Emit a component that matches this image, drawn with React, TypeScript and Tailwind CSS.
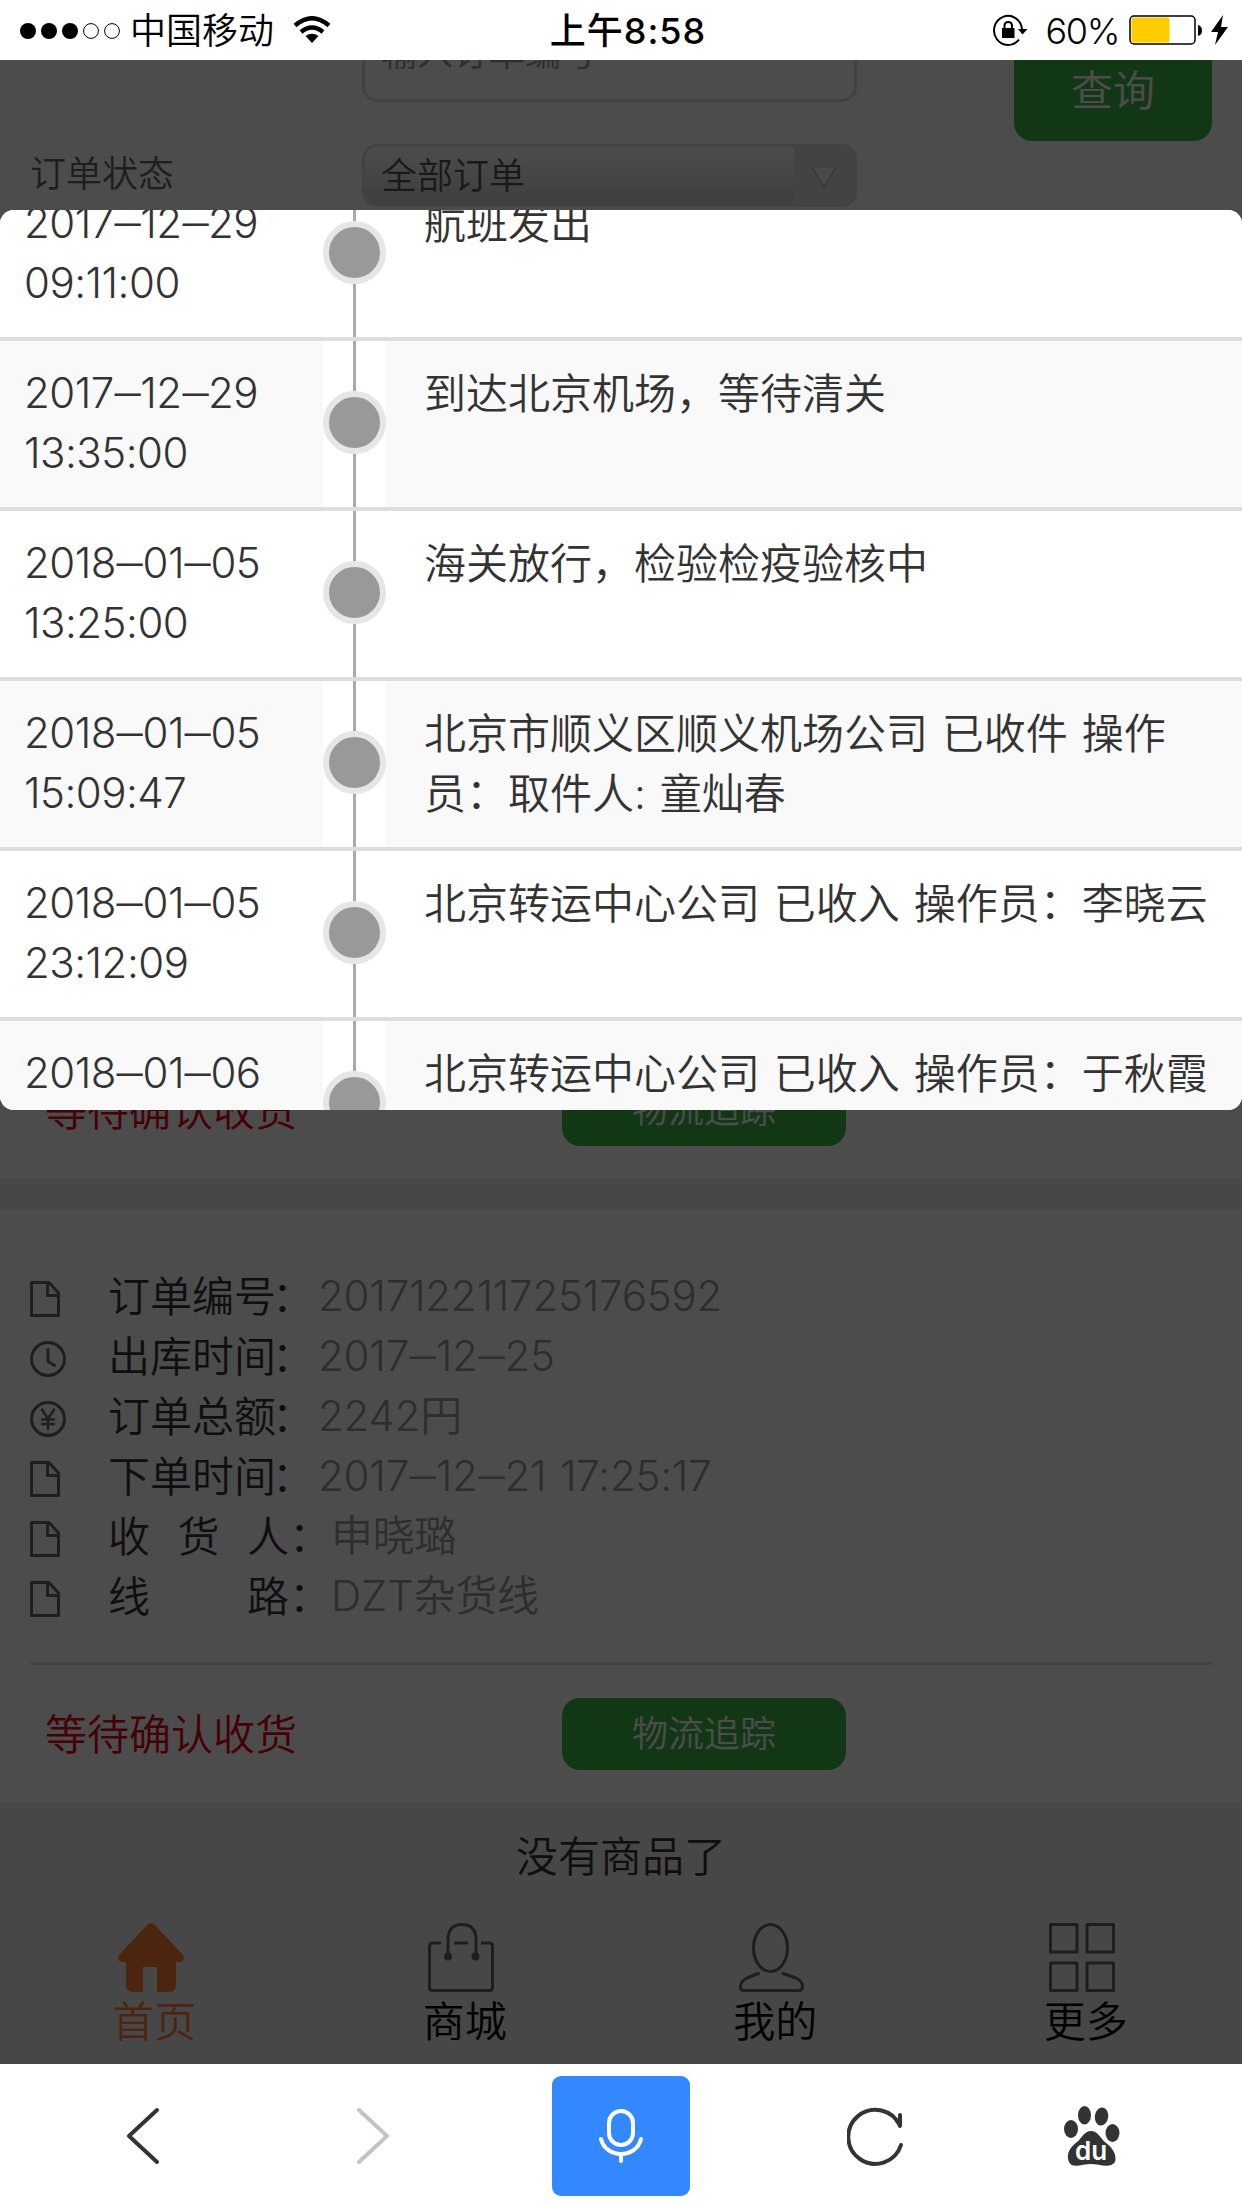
import React from 'react';

const timeline = [
  { date: '2017–12–29', time: '09:11:00', text: '航班发出' },
  { date: '2017–12–29', time: '13:35:00', text: '到达北京机场，等待清关' },
  { date: '2018–01–05', time: '13:25:00', text: '海关放行，检验检疫验核中' },
  { date: '2018–01–05', time: '15:09:47', text: '北京市顺义区顺义机场公司 已收件 操作员：取件人: 童灿春' },
  { date: '2018–01–05', time: '23:12:09', text: '北京转运中心公司 已收入 操作员：李晓云' },
  { date: '2018–01–06', time: '', text: '北京转运中心公司 已收入 操作员：于秋霞' },
];

const FileIcon = () => (
  <svg width="36" height="36" viewBox="0 0 36 36" fill="none" stroke="#666" strokeWidth="3" strokeLinejoin="round">
    <path d="M1.5 1.5H19L28.5 12V34.5H1.5Z" />
    <path d="M17.5 2V14.5H28" />
  </svg>
);

const ClockIcon = () => (
  <svg width="36" height="36" viewBox="0 0 36 36" fill="none" stroke="#666" strokeWidth="3" strokeLinecap="round" strokeLinejoin="round">
    <circle cx="18" cy="18" r="16.5" />
    <path d="M18 8.5V20.5L24.5 24.5" />
  </svg>
);

const YenIcon = () => (
  <svg width="36" height="36" viewBox="0 0 36 36" fill="none" stroke="#666" strokeWidth="2.4" strokeLinecap="round">
    <circle cx="18" cy="18" r="16.5" strokeWidth="3" />
    <path d="M12 8.5L18 18L24 8.5M18 18V28M12 18.5H24M12 23H24" />
  </svg>
);

const details = [
  { icon: <FileIcon />, label: ['订单编号'], value: '201712211725176592' },
  { icon: <ClockIcon />, label: ['出库时间'], value: '2017–12–25' },
  { icon: <YenIcon />, label: ['订单总额'], value: '2242円' },
  { icon: <FileIcon />, label: ['下单时间'], value: '2017–12–21 17:25:17' },
  { icon: <FileIcon />, label: ['收', '货', '人'], value: '申晓璐' },
  { icon: <FileIcon />, label: ['线', '路'], value: 'DZT杂货线' },
];

const tabs = [
  {
    name: '首页',
    color: 'text-[#ff7d38]',
    icon: (
      <svg width="66" height="69" viewBox="0 0 66 69" fill="#ff7d38">
        <path d="M29.5 1.5Q33 -1.5 36.5 1.5L65 32Q67.5 38 62 39H58V62Q58 69 51 69H39V44H25V69H15Q8 69 8 62V39H4Q-1.5 38 1 32Z" />
      </svg>
    ),
  },
  {
    name: '商城',
    color: 'text-black',
    icon: (
      <svg width="66" height="69" viewBox="0 0 66 69" fill="none" stroke="#666" strokeWidth="3">
        <path d="M13 20H4.5Q1.5 20 1.5 23V64.5Q1.5 67.5 4.5 67.5H61.5Q64.5 67.5 64.5 64.5V23Q64.5 20 61.5 20H53M26 20H40" />
        <path d="M20 34V15Q21 1.5 34 1.5Q47 1.5 48 15V34" />
        <circle cx="20" cy="33.5" r="2.5" fill="#666" />
        <circle cx="47.5" cy="33.5" r="2.5" fill="#666" />
      </svg>
    ),
  },
  {
    name: '我的',
    color: 'text-black',
    icon: (
      <svg width="66" height="69" viewBox="0 0 66 69" fill="none" stroke="#666" strokeWidth="3" strokeLinecap="round">
        <ellipse cx="31.5" cy="25" rx="17" ry="23.5" />
        <path d="M19.5 50.5L8 55Q1.5 58 1.5 64Q1.5 67.5 5 67.5H60Q63.5 67.5 63.5 64Q63.5 58 57 55L44 50.5" />
      </svg>
    ),
  },
  {
    name: '更多',
    color: 'text-black',
    icon: (
      <svg width="66" height="69" viewBox="0 0 66 69" fill="none" stroke="#666" strokeWidth="3" strokeLinejoin="round">
        <path d="M1.5 1.5H28V29H1.5ZM38 1.5H64.5V29H38ZM1.5 40H28V67.5H1.5ZM38 40H64.5V67.5H38Z" />
      </svg>
    ),
  },
];

// dates get wider dashes with a little air around them
function DateText({ value }: { value: string }) {
  return (
    <>
      {value.split('–').map((part, i) => (
        <React.Fragment key={i}>
          {i > 0 && <span className="mx-[3px] inline-block scale-x-125">–</span>}
          {part}
        </React.Fragment>
      ))}
    </>
  );
}

function StatusBar() {
  return (
    <header className="flex h-[60px] shrink-0 items-center bg-white text-black">
      <div className="flex w-[543px] items-center pl-5">
        <svg className="mt-px" width="101" height="18" viewBox="0 0 101 18">
          <circle cx="8" cy="9" r="8" />
          <circle cx="29" cy="9" r="8" />
          <circle cx="50" cy="9" r="8" />
          <circle cx="71" cy="9" r="7.4" fill="none" stroke="#000" />
          <circle cx="92" cy="9" r="7.4" fill="none" stroke="#000" />
        </svg>
        <span className="ml-[9px] pt-[2px] text-[36px] leading-[60px]">中国移动</span>
        <svg className="ml-[19px]" width="38" height="28" viewBox="0 0 38 28" fill="none" stroke="#000" strokeWidth="4.4">
          <path d="M2 9.5Q19 -5 36 9.5" />
          <path d="M8 16Q19 7 30 16" />
          <path d="M12.5 20Q19 15.5 25.5 20L19 27Z" fill="#000" stroke="none" />
        </svg>
      </div>
      <div className="w-[170px] whitespace-nowrap pt-[2px] text-center text-[36px] font-medium leading-[60px] tracking-[1px]">上午8:58</div>
      <div className="flex flex-1 items-center justify-end pr-[14px]">
        <svg width="36" height="32" viewBox="0 0 36 32" fill="none" stroke="#000" strokeWidth="2">
          <path d="M26 25.5A14 14.5 0 1 1 29 15" />
          <path d="M25 15H34.5L29.5 20.5Z" fill="#000" stroke="none" />
          <rect x="9" y="14" width="12.5" height="10" fill="#000" stroke="none" />
          <path d="M11.5 15V11Q12 8 15.2 8Q18.5 8 19 11V15" />
        </svg>
        <span className="ml-[17px] pt-[2px] text-[36px] leading-[60px] tracking-[-1.4px]">60%</span>
        <svg className="ml-[10px]" width="74" height="30" viewBox="0 0 74 30">
          <rect x="1" y="1" width="65" height="28" rx="4" fill="none" stroke="#000" strokeWidth="1.5" />
          <rect x="2.5" y="2.5" width="38" height="25" rx="2" fill="#ffcc00" />
          <path d="M69 10Q73 11 73 15.5Q73 20 69 21Z" />
        </svg>
        <svg className="ml-[8px]" width="17" height="30" viewBox="0 0 17 30">
          <path d="M12 0L0 17H7L4 30L17 12H10Z" />
        </svg>
      </div>
    </header>
  );
}

function SearchForm() {
  return (
    <section className="flex h-[585px] flex-col bg-white text-[36px] text-[#666]">
      <div className="flex h-[141px] items-end justify-between pl-[362px] pr-[30px]">
        <div className="mb-[39px] flex h-[96px] w-[495px] items-center rounded-[15px] border-[3px] border-[#ddd] pb-[2px] pl-4 text-[#999]">
          输入订单编号
        </div>
        <button className="h-[102px] w-[198px] shrink-0 rounded-[18px] bg-[#3cba45] text-[42px] text-white">查询</button>
      </div>
      <div className="mt-[3px] flex items-start">
        <span className="w-[362px] pl-[30px] leading-[60px]">订单状态</span>
        <div className="flex h-[63px] w-[495px] overflow-hidden rounded-[15px] border-[3px] border-[#ddd] bg-linear-to-b from-[#fff] to-[#d0d0d0]">
          <span className="flex-1 pl-4 leading-[58px] text-[#555]">全部订单</span>
          <span className="flex w-[60px] items-center justify-center bg-[#e2e2e2]">
            <svg className="mt-1" width="24" height="22" viewBox="0 0 24 22" fill="#f4f4f4">
              <path d="M1 1H23L12 21Z" />
              <path d="M1 1L12 21L23 1" fill="none" stroke="#bbb" strokeWidth="1.5" />
            </svg>
          </span>
        </div>
      </div>
    </section>
  );
}

function OrderCard() {
  return (
    <section className="mb-[30px] h-[594px] bg-white px-[30px] pt-[57px]">
      {details.map((item) => (
        <div key={item.value} className="flex h-[60px] items-center whitespace-nowrap text-[42px] leading-[60px]">
          <span className="w-[78px] shrink-0 pt-[6px]">{item.icon}</span>
          <span className={`flex shrink-0 pt-[2px] text-[#333] ${item.label.length > 1 ? 'w-[223px]' : 'w-[210px]'}`}>
            <span className={`flex shrink-0 justify-between ${item.label.length > 1 ? 'w-[181px]' : 'w-[164px]'}`}>
              {item.label.map((part) => (
                <span key={part}>{part}</span>
              ))}
            </span>
            ：
          </span>
          <span className="tracking-[-0.2px] text-[#999] [word-spacing:2px]">
            <DateText value={item.value} />
          </span>
        </div>
      ))}
      <div className="mt-[36px] flex h-[141px] items-center border-t-[3px] border-[#e2e2e2]">
        <span className="w-[532px] pl-[15px] text-[42px] text-[#e60012]">等待确认收货</span>
        <button className="h-[72px] w-[284px] rounded-[18px] bg-[#3cba45] text-[36px] text-white">物流追踪</button>
      </div>
    </section>
  );
}

function TabBar() {
  return (
    <nav className="grid grid-cols-4">
      {tabs.map((tab) => (
        <div key={tab.name} className={`flex flex-col items-center text-[42px] ${tab.color}`}>
          <span className="mr-[9px]">{tab.icon}</span>
          <span className="mr-[2px] leading-[60px]">{tab.name}</span>
        </div>
      ))}
    </nav>
  );
}

function TrackingModal() {
  return (
    <div className="absolute inset-x-0 top-[150px] flex h-[900px] flex-col justify-end overflow-hidden rounded-[14px] bg-white text-[42px] leading-[60px] text-[#333]">
      <div className="mb-[-77px]">
        {timeline.map((item, i) => (
          <div key={i} className={`flex h-[170px] border-t-4 border-[#ddd] ${i % 2 ? 'bg-[#f9f9f9]' : 'bg-white'}`}>
            <div className="w-[323px] shrink-0 pl-[24px] pt-[22px] tracking-[-0.5px]">
              <div>
                <DateText value={item.date} />
              </div>
              <div>{item.time}</div>
            </div>
            <div className="flex w-[63px] shrink-0 flex-col items-center bg-white">
              <div className="h-[50px] w-[3px] bg-[#aaa]" />
              <div className="size-[63px] shrink-0 rounded-full border-[6px] border-[#e6e6e6] bg-[#999]" />
              <div className="w-[3px] flex-1 bg-[#aaa]" />
            </div>
            <div className="flex-1 pl-[38px] pr-[25px] pt-[23px] [word-spacing:2px]">{item.text}</div>
          </div>
        ))}
      </div>
    </div>
  );
}

function BrowserBar() {
  return (
    <footer className="flex h-[144px] shrink-0 items-center bg-white pl-[127px]">
      <svg width="32" height="58" viewBox="0 0 32 58" fill="none" stroke="#333" strokeWidth="4" strokeLinecap="round" strokeLinejoin="round">
        <path d="M30 3L2 29L30 55" />
      </svg>
      <svg className="ml-[198px]" width="32" height="58" viewBox="0 0 32 58" fill="none" stroke="#c4c4c4" strokeWidth="4" strokeLinecap="round" strokeLinejoin="round">
        <path d="M2 3L30 29L2 55" />
      </svg>
      <button className="ml-[163px] flex h-[120px] w-[138px] items-center justify-center rounded-[9px] bg-[#3388ff]">
        <svg width="46" height="54" viewBox="0 0 46 54" fill="none" stroke="#fff" strokeWidth="4" strokeLinecap="round">
          <rect x="11" y="2" width="24" height="34" rx="12" />
          <path d="M3 30C8 50 38 50 43 30M23 46V52" />
        </svg>
      </button>
      <svg className="ml-[157px]" width="58" height="60" viewBox="0 0 58 60" fill="none" stroke="#333" strokeWidth="4" strokeLinecap="round" strokeLinejoin="round">
        <path d="M54 39A27 27 0 1 1 53 20V9M53 19L50 15" />
      </svg>
      <svg className="ml-[159px]" width="56" height="60" viewBox="0 0 56 60" fill="#333">
        <ellipse cx="7" cy="23" rx="7" ry="9" />
        <ellipse cx="20.5" cy="9.2" rx="6.5" ry="9.2" />
        <ellipse cx="37.5" cy="10.5" rx="6.7" ry="9" transform="rotate(8 37.5 10.5)" />
        <ellipse cx="48.5" cy="27" rx="7" ry="9" />
        <path d="M27 25C34 25 36 32 41 36C49 42 53 49 51 56C46 63 35 58 27 58C19 58 8 63 5 56C2 49 5 42 13 36C18 32 20 25 27 25Z" />
        <text x="27" y="54" textAnchor="middle" fill="#fff" fontSize="26" fontWeight="600" fontFamily="Inter">du</text>
      </svg>
    </footer>
  );
}

function App() {
  return (
    <div className="flex h-[2208px] w-[1242px] flex-col overflow-hidden bg-white font-['Inter','Noto_Sans_CJK_SC',sans-serif] font-[350]">
      <StatusBar />
      <main className="relative h-[2004px] overflow-hidden bg-[#eee]">
        <div className="mt-[-60px]">
          <SearchForm />
          <OrderCard />
          <OrderCard />
        </div>
        <p className="mb-[36px] mt-[-6px] text-center text-[42px] leading-[60px] text-[#333]">没有商品了</p>
        <TabBar />
        <div className="absolute inset-0 bg-black/70" />
        <TrackingModal />
      </main>
      <BrowserBar />
    </div>
  );
}

export default App;
